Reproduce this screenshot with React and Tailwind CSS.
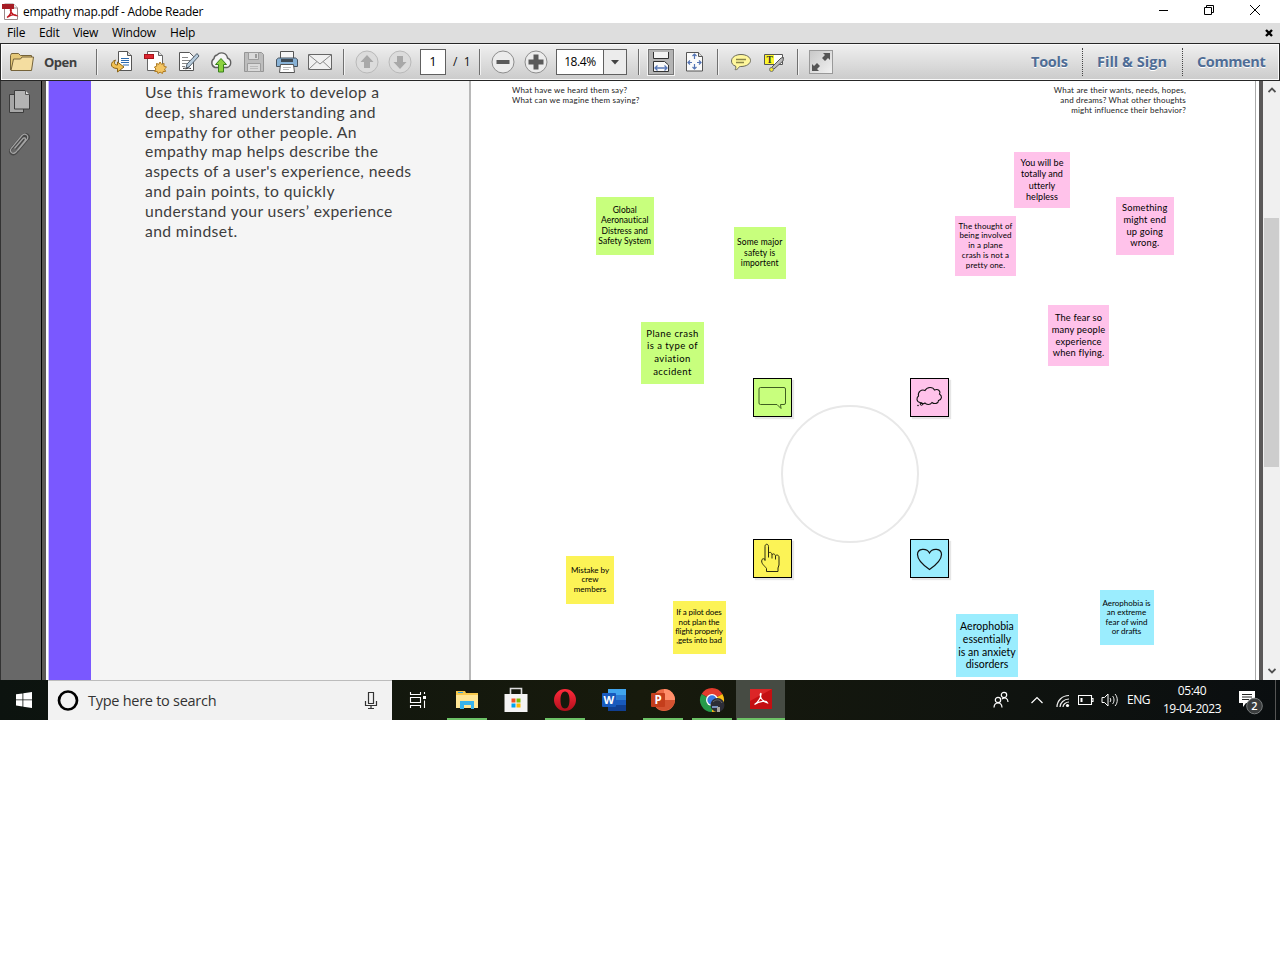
import React from 'react';

const Icon = ({ w = 24, h = 24, children, ...p }) => (
  <svg width={w} height={h} viewBox={`0 0 ${w} ${h}`} fill="none" className="block shrink-0" {...p}>{children}</svg>
);

/* ---------- title bar and menu ---------- */
function TitleBar() {
  return (
    <div className="flex h-[23px] items-center bg-white">
      <div className="flex flex-1 items-center pl-[2px]">
        <Icon w={17} h={17}>
          <path d="M2.500 1h9l4 4v11.500h-13z" fill="#fff" stroke="#9a8a8a" />
          <path d="M11.500 1v4h4" stroke="#9a8a8a" fill="#eee" />
          <rect x="0" y="1" width="12" height="5" fill="#a51c24" />
          <path d="M5 14.500c3-2 5-6 4-8.500-1.500 1 1 6.500 5.500 6.500-2-1.500-6-.5-9.500 2z" stroke="#c01820" strokeWidth="1.400" />
        </Icon>
        <span className="ml-[4px] whitespace-nowrap text-[12px] leading-[16px] tracking-[-0.29px] text-black">empathy map.pdf - Adobe Reader</span>
      </div>
      <div className="flex items-center gap-[35px] pr-[20px] pb-[3px]">
        <Icon w={10} h={10}><path d="M-1 5.500h10" stroke="#000" style={{ overflow: 'visible' }} /></Icon>
        <Icon w={11} h={10}><path d="M.5 2.500h7v7h-7zM2.500 2.500v-2h7v7h-2" stroke="#000" /></Icon>
        <Icon w={10} h={10}><path d="M0 0l10 10M10 0L0 10" stroke="#000" /></Icon>
      </div>
    </div>
  );
}

function MenuBar() {
  return (
    <div className="flex h-[20px] items-center bg-[#dedede] pr-[7px] pl-[7px] text-[12px] leading-[16px] text-black">
      <span className="w-[32px] tracking-[-0.2px]">File</span>
      <span className="w-[34px] tracking-[-0.2px]">Edit</span>
      <span className="w-[39px] tracking-[-0.3px]">View</span>
      <span className="w-[58px] tracking-[-0.25px]">Window</span>
      <span className="flex-1 tracking-[-0.2px]">Help</span>
      <Icon w={8} h={8}><path d="M1 1l6 6M7 1L1 7" stroke="#000" strokeWidth="2.400" /></Icon>
    </div>
  );
}

/* ---------- toolbar ---------- */
const Sep = () => <div className="h-[26px] w-[2px] shrink-0 border-l border-[#707070] bg-[#f2f2f2]" />;
const Cell = ({ children }) => <div className="flex w-[33px] shrink-0 items-center justify-center">{children}</div>;

function RoundButton({ kind }) {
  const dim = kind === 'up' || kind === 'down';
  const d = {
    up: 'M12 5l6.500 7H15v6H9v-6H5.500z',
    down: 'M12 19l6.500-7H15V6H9v6H5.500z',
    minus: 'M5.500 10h13v4h-13z',
    plus: 'M9.500 4.500h5v5h5v5h-5v5h-5v-5h-5v-5h5z',
  }[kind];
  return (
    <Icon>
      <circle cx="12" cy="12" r="11" fill={dim ? '#dcdcdc' : '#ececec'} stroke={dim ? '#b9b9b9' : '#8d8d8d'} />
      <path d={d} fill={dim ? '#a8a8a8' : '#5a5a5a'} />
    </Icon>
  );
}

function Toolbar() {
  return (
    <div className="flex h-[38px] items-center border border-[#262626] bg-linear-to-b from-[#f0f0f0] to-[#cbcbcb] pl-[9px] shadow-[inset_0_0_0_1px_#fafafa]">
      <div className="flex w-[86px] shrink-0 items-center">
        <Icon w={25} h={20}>
          <path d="M.5 18V3.500l1-2h7l2 2h11v4" fill="#e5c878" stroke="#75633a" />
          <path d="M1 18.500L3.500 7h7l1.500-2h11.500l-2 13.500z" fill="#f4dda0" stroke="#75633a" />
        </Icon>
        <span className="ml-[9px] text-[13px] leading-[18px] font-bold tracking-[-0.5px] text-[#404040]">Open</span>
      </div>
      <Sep />
      <div className="ml-[7px] flex">
        <Cell>
          <Icon>
            <path d="M8.500 1.500h9l4 4v15h-13z" fill="#fff" stroke="#555" />
            <path d="M17.500 1.500v4h4" fill="#ddd" stroke="#555" />
            <path d="M11 8.500h8M11 10.500h8M11 12.500h8M13 15h6" stroke="#2c6cb0" strokeWidth="1.200" />
            <path d="M5.500 10c-5 1.500-6.500 8.500 2 8.500v3.500l6.500-5-6.500-5v3c-3 0-4-2-2-5z" fill="#f3c252" stroke="#8a6418" />
          </Icon>
        </Cell>
        <Cell>
          <Icon>
            <path d="M4.500 1.500h11l4 4v15h-15z" fill="#fff" stroke="#666" />
            <path d="M15.500 1.500v4h4" fill="#ddd" stroke="#666" />
            <rect x="1.500" y="4.500" width="9" height="4" fill="#dc2630" stroke="#a5141b" />
            <path d="M17 12l1.500 2.300 2.600-.8-.2 2.700 2.600.9-2 1.900 1.200 2.400-2.700.1-.5 2-2.400-1.400-2.200 1.400-.5-2-2.700-.1 1.200-2.400-1.500-1.900 2.300-.9-.2-2.700 2.400.8z" fill="#f4c563" stroke="#ad7a21" />
          </Icon>
        </Cell>
        <Cell>
          <Icon>
            <path d="M3.500 2.500h10l4 4v14h-14z" fill="#fff" stroke="#555" />
            <path d="M6 7.500h6M6 10.500h8M6 13.500h6M6 16.500h3" stroke="#888" />
            <path d="M10 18l3-1 10-11-2-2.500L11 14z" fill="#b7cbdc" stroke="#4f5e6b" />
            <path d="M7 18.500c2-1 2 1 4 0s2 0 4 0" stroke="#333" />
          </Icon>
        </Cell>
        <Cell>
          <Icon>
            <path d="M6 17.500a5 5 0 01-1-8.800A4 4 0 018 5a6 6 0 0110.500 3A5 5 0 0118 17.500z" fill="#f5f5f5" stroke="#606060" strokeWidth="1.400" />
            <path d="M12 8.500l5.500 6h-3v7.500h-5v-7.500h-3z" fill="#8cd13e" stroke="#38801c" />
          </Icon>
        </Cell>
        <Cell>
          <Icon>
            <path d="M2.500 2.500h17l2 2v17h-19z" fill="#bdbdbd" stroke="#959595" />
            <path d="M6.500 2.500h10v7h-10zM5.500 13.500h13v8h-13z" fill="#dadada" stroke="#9c9c9c" />
            <path d="M13 4h2v4h-2z" fill="#999" /><path d="M8 16.500h8M8 18.500h8" stroke="#bbb" />
          </Icon>
        </Cell>
        <Cell>
          <Icon>
            <path d="M5.500 1.500h13v9h-13z" fill="#f6f6f6" stroke="#555" />
            <path d="M1.500 9.500l2-1.500h17l2 1.500v7h-21z" fill="#88b2d6" stroke="#47535f" />
            <path d="M6 9h12v3H6z" fill="#3e4a54" />
            <path d="M5.500 14.500h13l1 8h-15z" fill="#fff" stroke="#555" />
            <path d="M8 17.500h8M8 19.500h6" stroke="#bbb" />
          </Icon>
        </Cell>
        <Cell>
          <Icon>
            <path d="M.5 4.500h23v15H.5z" fill="#f0f0f0" stroke="#666" />
            <path d="M1 5l11 9L23 5M1 19l8-7.500M23 19l-8-7.500" stroke="#888" />
          </Icon>
        </Cell>
      </div>
      <div className="ml-[7px]"><Sep /></div>
      <div className="ml-[5px] flex"><Cell><RoundButton kind="up" /></Cell><Cell><RoundButton kind="down" /></Cell></div>
      <div className="ml-[4px] flex h-[26px] w-[26px] shrink-0 items-center justify-center border border-[#606060] bg-white text-[13px] text-black">1</div>
      <span className="ml-[7px] w-[26px] shrink-0 text-[12px] whitespace-pre text-[#111]">/  1</span>
      <Sep />
      <div className="ml-[5px] flex"><Cell><RoundButton kind="minus" /></Cell><Cell><RoundButton kind="plus" /></Cell></div>
      <div className="ml-[4px] flex h-[26px] w-[71px] shrink-0 border border-[#606060] bg-white">
        <div className="flex flex-1 items-center justify-center text-[12px] tracking-[-0.4px] text-black">18.4%</div>
        <div className="flex w-[23px] items-center justify-center border-l border-[#606060] bg-[#ececec]">
          <Icon w={8} h={5}><path d="M0 0h8L4 4.500z" fill="#444" /></Icon>
        </div>
      </div>
      <div className="ml-[11px]"><Sep /></div>
      <div className="ml-[8px] flex h-[26px] w-[26px] shrink-0 items-center justify-center border border-[#777] bg-[#b4b4b4] shadow-[0_0_0_1px_#f4f4f4]">
        <Icon>
          <path d="M4.500 2v6.500h15V2" fill="#f4f4f4" stroke="#333" />
          <path d="M4.500 21.500v-10h11l4 3.500v6.500z" fill="#f8f8f8" stroke="#333" />
          <path d="M6 18h12M8.500 15.500L6 18l2.500 2.500M15.500 15.500L18 18l-2.500 2.500" stroke="#5878b8" strokeWidth="1.300" />
        </Icon>
      </div>
      <div className="ml-[9px]"><Icon>
        <path d="M3.500 2.500h12l4 4v14.500h-16z" fill="#fafafa" stroke="#555" />
        <path d="M15.500 2.500v4h4" fill="#ddd" stroke="#555" />
        <path d="M11.500 4v5M11.500 14v5M5 12.500h4M14 12.500h4M9.500 6l2-2 2 2M9.500 17l2 2 2-2M7 10.500l-2 2 2 2M16 10.500l2 2-2 2" stroke="#5474b4" strokeWidth="1.200" />
      </Icon></div>
      <div className="ml-[10px]"><Sep /></div>
      <div className="ml-[5px] flex">
        <Cell>
          <Icon>
            <path d="M12 4.500c5.500 0 9.500 2.800 9.500 6s-4 6-9.500 6c-1 0-2 0-3 2-1 1-2 1.500-3 1 1-1 1-2 .5-3.500C4 15.500 2.500 13.500 2.500 11c0-3.700 4-6.500 9.500-6.500z" fill="#fff79c" stroke="#6a6a5a" />
            <path d="M7 9.500h10M7 12.500h8" stroke="#8a8648" strokeWidth="1.300" />
          </Icon>
        </Cell>
        <Cell>
          <Icon>
            <path d="M2.500 4.500h18v10h-18z" fill="#fff" stroke="#555" /><path d="M3 5h9v9H3z" fill="#fdf62b" />
            <text x="4.500" y="13" fontSize="9.500" fontWeight="700" fill="#333" className="font-['Liberation_Serif']">T</text>
            <path d="M9 18l10-10 2.500-.5-.5 3.500-9 8z" fill="#bbb" stroke="#555" /><circle cx="9.500" cy="19.500" r="2" fill="#f5e830" stroke="#777" />
          </Icon>
        </Cell>
      </div>
      <div className="ml-[7px]"><Sep /></div>
      <div className="ml-[10px] flex h-[24px] w-[24px] shrink-0 items-center justify-center border border-[#999] bg-linear-to-br from-[#c8c8c8] to-[#f2f2f2]">
        <Icon w={20} h={20}><path d="M12 1h7v7l-2-2-3 3-3-3 3-3zM8 19H1v-7l2 2 3-3 3 3-3 3z" fill="#555" /></Icon>
      </div>
      <div className="ml-auto flex h-full items-center pr-[12px] text-[14.5px] font-bold text-[#4f6d96] [text-shadow:0_1px_0_#fff]">
        <span className="w-[51px] tracking-[-0.25px]">Tools</span>
        <div className="h-[28px] border-l border-dotted border-[#444]" />
        <span className="w-[85px] tracking-[0.02px] whitespace-nowrap pl-[14px]">Fill &amp; Sign</span>
        <div className="ml-[14px] h-[28px] border-l border-dotted border-[#444]" />
        <span className="w-[70px] ml-[14px] tracking-[-0.4px]">Comment</span>
      </div>
    </div>
  );
}

/* ---------- document ---------- */
const frameworkText = [
  'Use this framework to develop a', 'deep, shared understanding and', 'empathy for other people. An',
  'empathy map helps describe the', "aspects of a user's experience, needs", 'and pain points, to quickly',
  'understand your users’ experience', 'and mindset.',
];

const notes = [
  { pos: 'left-[124.5px] top-[115.5px] w-[58.5px] h-[58.5px] bg-[#c8ff7d]', text: 'text-[8.5px] leading-[10.4px] tracking-[0.04px]', lines: ['Global', 'Aeronautical', 'Distress and', 'Safety System'] },
  { pos: 'left-[262.5px] top-[145.5px] w-[52.5px] h-[52.5px] bg-[#c8ff7d]', text: 'text-[8.5px] leading-[10.5px] tracking-[0.12px]', lines: ['Some major', 'safety is', 'importent'] },
  { pos: 'left-[170px] top-[241px] w-[63px] h-[62px] bg-[#c8ff7d]', text: 'text-[9.5px] leading-[12.6px] tracking-[0.45px]', lines: ['Plane crash', 'is a type of', 'aviation', 'accident'] },
  { pos: 'left-[543px] top-[70.5px] w-[56px] h-[56px] bg-[#ffc2ea]', text: 'text-[9px] leading-[11.3px] tracking-[0.04px]', lines: ['You will be', 'totally and', 'utterly', 'helpless'] },
  { pos: 'left-[484px] top-[135px] w-[61px] h-[60px] bg-[#ffc2ea]', text: 'text-[8px] leading-[9.8px] tracking-[0.1px]', lines: ['The thought of', 'being involved', 'in a plane', 'crash is not a', 'pretty one.'] },
  { pos: 'left-[644.500px] top-[115.5px] w-[58.5px] h-[58.5px] bg-[#ffc2ea]', text: 'text-[9.3px] leading-[11.7px] tracking-[0.2px]', lines: ['Something', 'might end', 'up going', 'wrong.'] },
  { pos: 'left-[577px] top-[224px] w-[61px] h-[61px] bg-[#ffc2ea]', text: 'text-[9.3px] leading-[11.7px] tracking-[0.16px]', lines: ['The fear so', 'many people', 'experience', 'when flying.'] },
  { pos: 'left-[95px] top-[475px] w-[48px] h-[48px] bg-[#fcf356]', text: 'text-[8px] leading-[9.5px]', lines: ['Mistake by', 'crew', 'members'] },
  { pos: 'left-[201.5px] top-[519.5px] w-[53px] h-[53px] bg-[#fcf356]', text: 'text-[8px] leading-[9.4px] tracking-[-0.12px]', lines: ['If a pilot does', 'not plan the', 'flight properly', ',gets into bad'] },
  { pos: 'left-[485px] top-[533px] w-[62px] h-[63px] bg-[#9bedfe]', text: 'text-[10.5px] leading-[12.7px] tracking-[0.04px]', lines: ['Aerophobia', 'essentially', 'is an anxiety', 'disorders'] },
  { pos: 'left-[628.5px] top-[509px] w-[54px] h-[55px] bg-[#9bedfe]', text: 'text-[8px] leading-[9.4px]', lines: ['Aerophobia is', 'an extreme', 'fear of wind', 'or drafts'] },
];

const badges = [
  { pos: 'left-[282px] top-[297px] bg-[#c8ff7d]', art: <path d="M6.500 8.500h23.500q1.500 0 1.500 1.500v14q0 1.500-1.500 1.500h-3.500l.5 4-4-4H6.500q-1.500 0-1.500-1.500V10q0-1.500 1.500-1.500z" stroke="#3f5f20" strokeLinejoin="round" /> },
  { pos: 'left-[439px] top-[297px] bg-[#ffc2ea]', art: <><path d="M9 23.500c-4-1-3.500-5-1.500-6.500-1-4 3-7 6.500-5.500 2-4 8-4 9.500-.5 4-1.500 6.500 1.500 5 4 3 2 2.500 5.500-1 6.500 0 3-4 4-6.500 2-2 3-6 2-7 .5-1.500 1-3.500 1-5-.5z" stroke="#111" strokeWidth="1.100" /><circle cx="10.500" cy="25" r="1.300" stroke="#111" /><circle cx="7" cy="26.500" r=".8" fill="#111" /></> },
  { pos: 'left-[282px] top-[458px] bg-[#fcf356]', art: <path transform="translate(-1.500 -.5)" d="M12.500 21V7c0-3 3.500-3 3.500 0v10-3.500c2-1.500 3.500 0 3.500 2 1-2 3-1 3.500.8 1.500-1.600 3.500-.3 3.500 1.200v8l-1 3v3.500h-11.500v-3c-2-3-6-5-4.500-9 1-1 2-1 3 0zM16 15.500V18M19.500 15.500V19M23 16.500V20" stroke="#2b2a10" strokeLinejoin="round" /> },
  { pos: 'left-[439px] top-[458px] bg-[#9bedfe]', art: <path d="M18.500 29.500C12 25 6.500 20 6.500 14.500c0-6 9-7 12-1.500 3-5.500 12-4.500 12 1.500C30.500 20 25 25 18.500 29.500z" stroke="#111" strokeWidth="1.200" /> },
];

function Canvas() {
  return (
    <div className="relative w-[784px] shrink-0 overflow-hidden bg-white font-['Lato','Noto_Sans',sans-serif]">
      <div className="flex justify-between pt-[4px] pr-[69px] pl-[41px] text-[8px] leading-[10px] tracking-[0.2px] text-[#222]">
        <div>What have we heard them say?<br />What can we magine them saying?</div>
        <div className="text-right">What are their wants, needs, hopes,<br />and dreams? What other thoughts<br />might influence their behavior?</div>
      </div>
      {notes.map((n) => (
        <div key={n.lines.join()} className={`absolute flex flex-col items-center justify-center text-center whitespace-nowrap text-black ${n.pos} ${n.text}`}>
          {n.lines.map((l) => <span key={l}>{l}</span>)}
        </div>
      ))}
      <div className="absolute top-[323.5px] left-[310px] h-[138px] w-[138px] rounded-full border-2 border-[#e8e8e8]" />
      {badges.map((b) => (
        <div key={b.pos} className={`absolute h-[39px] w-[39px] border border-black shadow-[2px_2px_1px_#e6e6e6] ${b.pos}`}>
          <Icon w={37} h={37}>{b.art}</Icon>
        </div>
      ))}
    </div>
  );
}

function Workspace() {
  return (
    <div className="flex h-[599px] overflow-hidden">
      <div className="flex w-[42px] shrink-0 flex-col items-center border-r border-l border-r-black border-l-[#333] bg-[#686868] pt-[8px] pr-[4px]">
        <Icon w={22} h={25}>
          <path d="M1.500 5.500h14v18h-14z" fill="#a6a6a6" stroke="#3c3c3c" />
          <path d="M6.500 1.500h11l4 4v14.500h-15z" fill="#b3b3b3" stroke="#3c3c3c" /><path d="M17.500 1.500v4h4" fill="#ddd" stroke="#555" />
        </Icon>
        <div className="mt-[18px]"><Icon w={24} h={26}>
          <path d="M5 16L15 5c3-3 7 0 4.500 3.500L9 21c-3 3-8 0-5-4L15.500 3.500c4-3 8 0 5.500 4M8 17l9-10" stroke="#484848" strokeWidth="2.400" />
          <path d="M7.500 16.500L16 6.500c1.500-1.500 3.500 0 2 2L9 20c-3 3-7.500 0-4.500-4L15 3.500c3-3 7.500 0 5 4L11 18" stroke="#a4a4a4" strokeWidth="1.200" />
        </Icon></div>
      </div>
      <div className="w-[4px] shrink-0 bg-[#5c5955]" />
      <div className="w-[3px] shrink-0 border-r border-[#c9c0ff] bg-white" />
      <div className="w-[42px] shrink-0 bg-[#7a58ff]" />
      <div className="w-[380px] shrink-0 border-r-2 border-[#b8b8b8] bg-[#f5f5f5] pt-[2px] pl-[54px] font-['Lato','Noto_Sans',sans-serif] text-[15.7px] leading-[19.8px] tracking-[0.38px] whitespace-nowrap text-[#3d3d3d]">
        {frameworkText.map((l) => <div key={l}>{l}</div>)}
      </div>
      <Canvas />
      <div className="w-[4px] shrink-0 border-l border-[#aaa] bg-white" />
      <div className="w-[4px] shrink-0 bg-[#5a5858]" />
      <div className="flex flex-1 flex-col items-center justify-between bg-[#f0f0f0] py-[6px]">
        <Icon w={8} h={6}><path d="M.5 5L4 1.500 7.500 5" stroke="#505050" strokeWidth="1.800" /></Icon>
        <div className="mt-[3px] mb-[80px] h-[249px] w-[15px] bg-[#cdcdcd]" />
        <Icon w={8} h={6}><path d="M.5 1L4 4.500 7.500 1" stroke="#505050" strokeWidth="1.800" /></Icon>
      </div>
    </div>
  );
}

/* ---------- taskbar ---------- */
const TaskApp = ({ open, active, children }) => (
  <div className={`relative flex h-[40px] w-[49px] shrink-0 items-center justify-center ${active ? 'bg-[#464b43]' : ''}`}>
    {children}
    {open && <div className={`absolute bottom-0 h-[2px] bg-[#6cc166] ${active ? 'w-[48px]' : 'w-[40px]'}`} />}
  </div>
);

function Taskbar() {
  return (
    <div className="flex h-[40px] bg-linear-to-r from-[#0c130f] via-[#171a0c] to-[#0a0e10] text-white">
      <div className="flex w-[48px] items-center justify-center">
        <Icon w={16} h={16}><path d="M0 2.300L6.500 1.400v6.100H0zM7.300 1.300L16 0v7.500H7.300zM0 8.300h6.500v6.200L0 13.600zM7.300 8.300H16V16l-8.700-1.300z" fill="#fff" /></Icon>
      </div>
      <div className="flex w-[344px] items-center border-t border-[#bcbcbc] bg-[#f2f2f2] pr-[14px] pl-[9px]">
        <Icon w={22} h={22}><circle cx="11" cy="10.500" r="9" stroke="#000" strokeWidth="2.700" /></Icon>
        <span className="ml-[9px] flex-1 text-[14.500px] tracking-[-0.27px] text-[#333]">Type here to search</span>
        <Icon w={14} h={18}><path d="M4.500 .5h5v11h-5zM1.500 9v4.500h11V9M7 13.500V17M4 16.500h6" stroke="#333" strokeWidth="1.200" strokeLinejoin="round" /></Icon>
      </div>
      <div className="ml-px flex">
        <TaskApp><Icon w={18} h={18}><path d="M1.500 1v2.500h10V1M1.500 6.500h10v5h-10zM1.500 17v-2.500h10V17M15.500 1v2M15.500 9.500V17" stroke="#fff" strokeWidth="1.100" /><path d="M14 5h3v3h-3z" fill="#fff" /></Icon></TaskApp>
        <TaskApp open>
          <Icon w={22} h={20}><path d="M0 1h9l1 2h12v15H0z" fill="#f7c94d" /><path d="M0 5h22v13H0z" fill="#ffe695" /><path d="M2 2h5v1H2z" fill="#35a2df" /><path d="M4 19v-8h14v8h-3v-4H8v4z" fill="#37b3ed" /></Icon>
        </TaskApp>
        <TaskApp>
          <Icon w={24} h={26}><path d="M6.500 8V1.500h11V8" stroke="#ddd" strokeWidth="1.600" /><path d="M.5 7h23v18H.5z" fill="#f4f4f4" /><path d="M7.500 11.500h4v4h-4z" fill="#f25022" /><path d="M12.500 11.500h4v4h-4z" fill="#7fba00" /><path d="M7.500 16.500h4v4h-4z" fill="#00a4ef" /><path d="M12.500 16.500h4v4h-4z" fill="#ffb900" /></Icon>
        </TaskApp>
        <TaskApp open>
          <Icon><defs><linearGradient id="op" x2="0" y2="1"><stop stopColor="#ff2a3b" /><stop offset="1" stopColor="#b0101c" /></linearGradient></defs><path fillRule="evenodd" d="M12 1a11 11 0 110 22 11 11 0 010-22zm0 2.500C9 3.500 7.500 7 7.500 12s1.500 8.500 4.500 8.500 4.500-3.500 4.500-8.500S15 3.500 12 3.500z" fill="url(#op)" /></Icon>
        </TaskApp>
        <TaskApp>
          <Icon><path d="M6 1h18v6H6z" fill="#41a5ee" /><path d="M6 7h18v5H6z" fill="#2b7cd3" /><path d="M6 12h18v5H6z" fill="#185abd" /><path d="M6 17h18v6H6z" fill="#103f91" /><rect y="5" width="14" height="14" rx="1" fill="#185abd" /><text x="1.500" y="16" fontSize="11" fontWeight="700" fill="#fff">W</text></Icon>
        </TaskApp>
        <TaskApp open>
          <Icon><circle cx="13" cy="12" r="11" fill="#ed6c47" /><path d="M13 1a11 11 0 0111 11H13z" fill="#ff8f6b" /><path d="M24 12a11 11 0 01-21 4l10-4z" fill="#d35230" /><rect y="5" width="14" height="14" rx="1" fill="#c43e1c" /><text x="3.500" y="16" fontSize="11.500" fontWeight="700" fill="#fff">P</text></Icon>
        </TaskApp>
        <TaskApp open>
          <Icon w={26} h={26}>
            <path d="M13 13L2.600 7A12 12 0 0123.400 7z" fill="#e33b2e" /><path d="M13 13L23.400 7A12 12 0 0113 25z" fill="#fbc116" /><path d="M13 13v12A12 12 0 012.600 7z" fill="#269b4b" />
            <circle cx="13" cy="13" r="6" fill="#fff" /><circle cx="13" cy="13" r="4.700" fill="#3b79e1" />
            <circle cx="18.500" cy="18" r="7" fill="#2c2d36" /><path d="M13 19h6v2h-6z" fill="#7790bd" /><path d="M18 20h3v5h-3z" fill="#a7a39e" /><path d="M14 15c3-3 7-3 9 1" stroke="#666" />
          </Icon>
        </TaskApp>
        <TaskApp open active>
          <Icon w={22} h={22}><path d="M0 0h22v20H0z" fill="#c40f12" /><path d="M0 0h22L0 12z" fill="#dc2527" /><path d="M4.500 15.500c3.500-2 7-7.500 6.500-11-1.500-1-1.500 7.500 6.500 9.500-1-3-8-2-13 1.500z" stroke="#fff" strokeWidth="1.200" /></Icon>
        </TaskApp>
      </div>
      <div className="ml-auto flex shrink-0 items-center">
        <Icon w={16} h={18}><circle cx="11" cy="4" r="2.700" stroke="#fff" strokeWidth="1.200" /><circle cx="5" cy="9" r="2.700" stroke="#fff" strokeWidth="1.200" /><path d="M1 16.500c.3-6 7.700-6 8 0M9 8c3-2.500 6-.5 6 3" stroke="#fff" strokeWidth="1.200" /></Icon>
        <div className="ml-[21px]"><Icon w={14} h={9}><path d="M1.500 7l5.500-5.500L12.500 7" stroke="#fff" strokeWidth="1.200" /></Icon></div>
        <div className="ml-[12px] pt-[1px]"><Icon w={14} h={14}><path d="M1 13C1 7 6 1.500 13 1.500M4 13c0-4 4-8 9-8M7 13c0-2.500 3-5 6-5" stroke="#eee" strokeWidth="1.200" /><circle cx="11.500" cy="11.500" r="1.600" fill="#fff" /></Icon></div>
        <div className="ml-[8px]"><Icon w={16} h={12}><path d="M.5 1.500h13v9H.5zM14 4.500h1v3h-1" stroke="#fff" strokeWidth="1.100" /><path d="M2.500 4h2v4h-2z" fill="#fff" /></Icon></div>
        <div className="ml-[7px]"><Icon w={17} h={16}><path d="M1 5.500h2.500L7 2v12l-3.500-3.500H1z" stroke="#fff" /><path d="M9 6c1 1 1 3 0 4M11.500 4c2 2 2 6 0 8M14 2c3 3 3 9 0 12" stroke="#eee" /></Icon></div>
        <span className="ml-[9px] w-[24px] text-[12px] tracking-[-0.5px]">ENG</span>
        <div className="ml-[11px] w-[60px] text-center text-[12px] leading-[18px] tracking-[-0.45px] whitespace-nowrap">05:40<br />19-04-2023</div>
        <div className="ml-[17px] pt-[5px]"><Icon w={26} h={26}>
          <path d="M0 1h16v12H7l-3 4v-4H0z" fill="#fff" /><path d="M3 4.500h10M3 7h10M3 9.500h7" stroke="#222" />
          <circle cx="15.500" cy="16" r="7.800" fill="#3a3d3e" stroke="#777b7c" /><text x="12.300" y="20.200" fontSize="11" fontWeight="600" fill="#fff">2</text>
        </Icon></div>
        <div className="ml-[10px] h-[40px] w-[5px] border-l border-[#555]" />
      </div>
    </div>
  );
}

export default function App() {
  return (
    <div className="h-[960px] w-[1280px] overflow-hidden bg-white font-['Open_Sans','Noto_Sans',sans-serif]">
      <TitleBar />
      <MenuBar />
      <Toolbar />
      <Workspace />
      <Taskbar />
    </div>
  );
}
